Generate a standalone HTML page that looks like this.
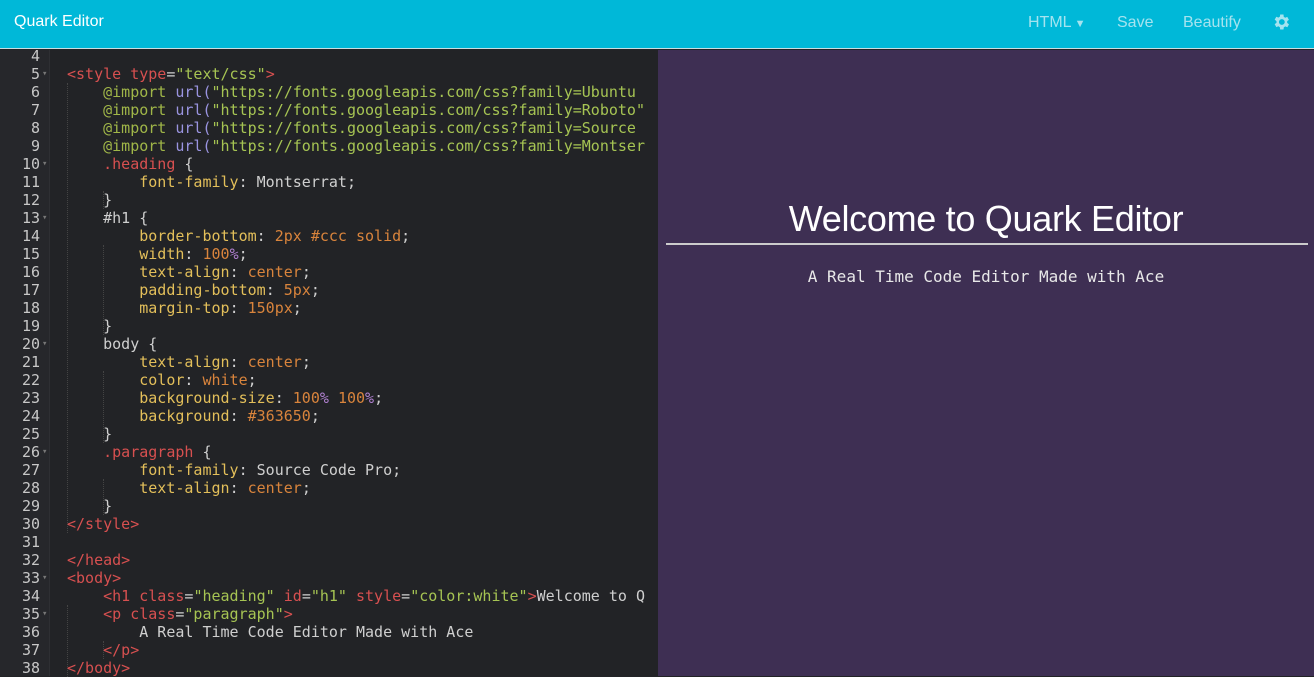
<!DOCTYPE html>
<html><head><meta charset="utf-8"><style>
*{margin:0;padding:0;box-sizing:border-box}
body{width:1314px;height:676px;overflow:hidden;background:#222326;font-family:"Liberation Sans",sans-serif;position:relative}
.nav{position:absolute;left:0;top:0;width:1314px;height:49px;background:#00b8d8;border-bottom:1px solid #c8dde2}
.nav .brand{position:absolute;left:14px;top:13px;color:#fff;font-size:16px}
.nav .it{position:absolute;top:14px;color:#a5e3ef;font-size:16px}
.gut{position:absolute;left:0;top:50px;width:50px;height:626px;background:#26272b;border-right:1px solid #2e2f33}
.ed{position:absolute;left:0;top:47px;width:658px;height:630px;font-family:"DejaVu Sans Mono",monospace;font-size:15px;line-height:18px;white-space:pre;color:#cfcfcf;overflow:hidden}
.ln{position:absolute;left:0;width:40px;text-align:right;color:#c8c8c8}
.fd{position:absolute;left:42px;color:#777;font-size:9px}
.cd{position:absolute;left:67px}
.t{color:#d75050}.s{color:#a6c453}.p{color:#e3bf5a}.n{color:#d9843c}.v{color:#d9843c}.i{color:#a0b648}.u{color:#9a94e0}.c{color:#d75050}.pc{color:#b080d0}
.guide{position:absolute;border-left:1px dotted #444;}
.prev{position:absolute;left:658px;top:50px;width:656px;height:626px;background:#3e2f53}
.h1{position:absolute;left:0;width:656px;top:148px;text-align:center;color:#fff;font-size:36px;letter-spacing:-0.3px}
.hr{position:absolute;left:8px;top:193px;width:642px;height:2px;background:#ccc}
.pp{position:absolute;left:0;width:656px;top:217px;text-align:center;color:#e8e8e8;font-family:"DejaVu Sans Mono",monospace;font-size:16px}
</style></head><body>
<div class="nav"><div class="brand">Quark Editor</div>
<div class="it" style="left:1028px">HTML<span style="font-size:11px;margin-left:3px">▼</span></div>
<div class="it" style="left:1117px">Save</div>
<div class="it" style="left:1183px">Beautify</div>
<svg style="position:absolute;left:1271px;top:12px" width="20" height="20" viewBox="0 0 24 24"><path fill="#a5e3ef" d="M19.4 13a7.5 7.5 0 000-2l2.1-1.6-2-3.5-2.5 1a7.3 7.3 0 00-1.7-1L15 3h-4l-.4 2.7a7.3 7.3 0 00-1.7 1l-2.5-1-2 3.5L6.6 11a7.5 7.5 0 000 2l-2.2 1.6 2 3.5 2.5-1a7.3 7.3 0 001.7 1L11 21h4l.4-2.7a7.3 7.3 0 001.7-1l2.5 1 2-3.5zM13 15.5a3.5 3.5 0 110-7 3.5 3.5 0 010 7z"/></svg>
</div>
<div class="gut"></div>
<div class="ed">
<div class="guide" style="left:67px;top:36px;height:450px"></div>
<div class="guide" style="left:103px;top:144px;height:18px"></div>
<div class="guide" style="left:103px;top:198px;height:90px"></div>
<div class="guide" style="left:103px;top:324px;height:72px"></div>
<div class="guide" style="left:103px;top:432px;height:36px"></div>
<div class="guide" style="left:67px;top:558px;height:72px"></div>
<div class="guide" style="left:103px;top:594px;height:18px"></div>
<div class="ln" style="top:0">4</div>
<div class="ln" style="top:18px">5</div><div class="fd" style="top:18px">▾</div><div class="cd" style="top:18px"><span class="t">&lt;style</span> <span class="c">type</span>=<span class="s">"text/css"</span><span class="t">&gt;</span></div>
<div class="ln" style="top:36px">6</div><div class="cd" style="top:36px">    <span class="i">@import</span> <span class="u">url(</span><span class="s">"https://fonts.googleapis.com/css?family=Ubuntu</span></div>
<div class="ln" style="top:54px">7</div><div class="cd" style="top:54px">    <span class="i">@import</span> <span class="u">url(</span><span class="s">"https://fonts.googleapis.com/css?family=Roboto"</span></div>
<div class="ln" style="top:72px">8</div><div class="cd" style="top:72px">    <span class="i">@import</span> <span class="u">url(</span><span class="s">"https://fonts.googleapis.com/css?family=Source</span></div>
<div class="ln" style="top:90px">9</div><div class="cd" style="top:90px">    <span class="i">@import</span> <span class="u">url(</span><span class="s">"https://fonts.googleapis.com/css?family=Montser</span></div>
<div class="ln" style="top:108px">10</div><div class="fd" style="top:108px">▾</div><div class="cd" style="top:108px">    <span class="t">.heading</span> {</div>
<div class="ln" style="top:126px">11</div><div class="cd" style="top:126px">        <span class="p">font-family</span>: Montserrat;</div>
<div class="ln" style="top:144px">12</div><div class="cd" style="top:144px">    }</div>
<div class="ln" style="top:162px">13</div><div class="fd" style="top:162px">▾</div><div class="cd" style="top:162px">    #h1 {</div>
<div class="ln" style="top:180px">14</div><div class="cd" style="top:180px">        <span class="p">border-bottom</span>: <span class="n">2px</span> <span class="v">#ccc</span> <span class="v">solid</span>;</div>
<div class="ln" style="top:198px">15</div><div class="cd" style="top:198px">        <span class="p">width</span>: <span class="n">100</span><span class="pc">%</span>;</div>
<div class="ln" style="top:216px">16</div><div class="cd" style="top:216px">        <span class="p">text-align</span>: <span class="v">center</span>;</div>
<div class="ln" style="top:234px">17</div><div class="cd" style="top:234px">        <span class="p">padding-bottom</span>: <span class="n">5px</span>;</div>
<div class="ln" style="top:252px">18</div><div class="cd" style="top:252px">        <span class="p">margin-top</span>: <span class="n">150px</span>;</div>
<div class="ln" style="top:270px">19</div><div class="cd" style="top:270px">    }</div>
<div class="ln" style="top:288px">20</div><div class="fd" style="top:288px">▾</div><div class="cd" style="top:288px">    body {</div>
<div class="ln" style="top:306px">21</div><div class="cd" style="top:306px">        <span class="p">text-align</span>: <span class="v">center</span>;</div>
<div class="ln" style="top:324px">22</div><div class="cd" style="top:324px">        <span class="p">color</span>: <span class="v">white</span>;</div>
<div class="ln" style="top:342px">23</div><div class="cd" style="top:342px">        <span class="p">background-size</span>: <span class="n">100</span><span class="pc">%</span> <span class="n">100</span><span class="pc">%</span>;</div>
<div class="ln" style="top:360px">24</div><div class="cd" style="top:360px">        <span class="p">background</span>: <span class="v">#363650</span>;</div>
<div class="ln" style="top:378px">25</div><div class="cd" style="top:378px">    }</div>
<div class="ln" style="top:396px">26</div><div class="fd" style="top:396px">▾</div><div class="cd" style="top:396px">    <span class="t">.paragraph</span> {</div>
<div class="ln" style="top:414px">27</div><div class="cd" style="top:414px">        <span class="p">font-family</span>: Source Code Pro;</div>
<div class="ln" style="top:432px">28</div><div class="cd" style="top:432px">        <span class="p">text-align</span>: <span class="v">center</span>;</div>
<div class="ln" style="top:450px">29</div><div class="cd" style="top:450px">    }</div>
<div class="ln" style="top:468px">30</div><div class="cd" style="top:468px"><span class="t">&lt;/style&gt;</span></div>
<div class="ln" style="top:486px">31</div>
<div class="ln" style="top:504px">32</div><div class="cd" style="top:504px"><span class="t">&lt;/head&gt;</span></div>
<div class="ln" style="top:522px">33</div><div class="fd" style="top:522px">▾</div><div class="cd" style="top:522px"><span class="t">&lt;body&gt;</span></div>
<div class="ln" style="top:540px">34</div><div class="cd" style="top:540px">    <span class="t">&lt;h1</span> <span class="c">class</span>=<span class="s">"heading"</span> <span class="c">id</span>=<span class="s">"h1"</span> <span class="c">style</span>=<span class="s">"color:white"</span><span class="t">&gt;</span>Welcome to Q</div>
<div class="ln" style="top:558px">35</div><div class="fd" style="top:558px">▾</div><div class="cd" style="top:558px">    <span class="t">&lt;p</span> <span class="c">class</span>=<span class="s">"paragraph"</span><span class="t">&gt;</span></div>
<div class="ln" style="top:576px">36</div><div class="cd" style="top:576px">        A Real Time Code Editor Made with Ace</div>
<div class="ln" style="top:594px">37</div><div class="cd" style="top:594px">    <span class="t">&lt;/p&gt;</span></div>
<div class="ln" style="top:612px">38</div><div class="cd" style="top:612px"><span class="t">&lt;/body&gt;</span></div>
</div>
<div class="prev"><div class="h1">Welcome to Quark Editor</div><div class="hr"></div><div class="pp">A Real Time Code Editor Made with Ace</div></div>
</body></html>
